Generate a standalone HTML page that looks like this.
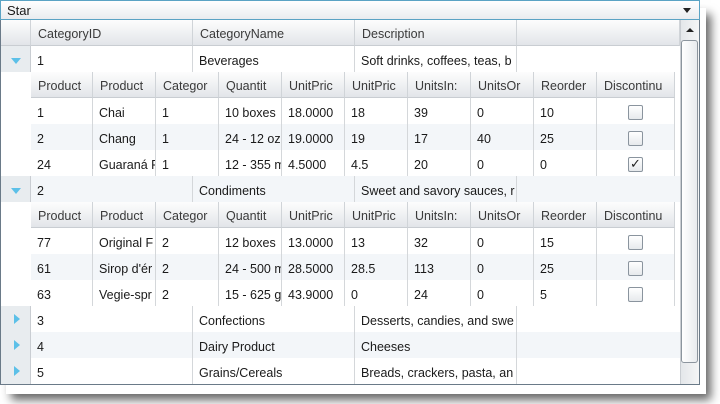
<!DOCTYPE html>
<html><head><style>
body{margin:0;width:720px;height:404px;background:#fff;font-family:"Liberation Sans",sans-serif;font-size:12.5px;color:#1a1a1a;position:relative;overflow:hidden}
.a{position:absolute;box-sizing:border-box}
.hd{background:linear-gradient(#fdfdfd,#e2e5e9);border-right:1px solid #d0d4d8;border-bottom:1px solid #c9cdd2;color:#3a3a3a;padding-left:7px;padding-top:1px;line-height:26px;white-space:nowrap;overflow:hidden}
.c{border-right:1px solid #d4d7da;padding-left:6px;padding-top:2px;line-height:26px;white-space:nowrap;overflow:hidden;height:26px}
.alt{background:#f3f6f9}
.ind{background:#e8ecef}
.cb{position:absolute;width:13px;height:13px;border:1px solid #8a949e;border-radius:2px;background:linear-gradient(#fff,#e6e9ec)}
</style></head><body>
<div class="a" style="left:6px;top:8px;width:700px;height:386px;box-shadow:5px 6px 9px rgba(0,0,0,.6);background:#fff"></div>
<div class="a" style="left:0;top:0;width:700px;height:385px;background:#fff;border-left:1px solid #6a7a88;border-right:1px solid #6a7a88;border-bottom:1px solid #6a7a88"></div>
<div class="a" style="left:0;top:0;width:700px;height:20px;border:1px solid #5aa3c4;background:linear-gradient(#fff,#e9ecef);padding-left:6px;line-height:19px;font-size:13px">Star</div>
<div class="a" style="left:683px;top:8px;width:0;height:0;border-left:4px solid transparent;border-right:4px solid transparent;border-top:5px solid #222"></div>
<div class="a hd" style="left:1px;top:20px;width:30px;height:26px"></div>
<div class="a hd" style="left:31px;top:20px;width:162px;height:26px">CategoryID</div>
<div class="a hd" style="left:193px;top:20px;width:162px;height:26px">CategoryName</div>
<div class="a hd" style="left:355px;top:20px;width:162px;height:26px">Description</div>
<div class="a hd" style="left:517px;top:20px;width:163px;height:26px"></div>
<div class="a ind" style="left:1px;top:46px;width:30px;height:26px"></div>
<div class="a ind" style="left:1px;top:176px;width:30px;height:26px"></div>
<div class="a ind" style="left:1px;top:306px;width:30px;height:78px;border-right:1px solid #c9cdd2"></div>
<div class="a" style="left:30px;top:46px;width:1px;height:26px;background:#c9cdd2"></div>
<div class="a" style="left:30px;top:176px;width:1px;height:26px;background:#c9cdd2"></div>
<div class="a" style="left:11px;top:58px;border-left:5px solid transparent;border-right:5px solid transparent;border-top:6px solid #5cc0e8"></div>
<div class="a" style="left:11px;top:188px;border-left:5px solid transparent;border-right:5px solid transparent;border-top:6px solid #5cc0e8"></div>
<div class="a" style="left:14px;top:314px;border-top:5px solid transparent;border-bottom:5px solid transparent;border-left:6px solid #5cc0e8"></div>
<div class="a" style="left:14px;top:340px;border-top:5px solid transparent;border-bottom:5px solid transparent;border-left:6px solid #5cc0e8"></div>
<div class="a" style="left:14px;top:366px;border-top:5px solid transparent;border-bottom:5px solid transparent;border-left:6px solid #5cc0e8"></div>
<div class="a c" style="left:31px;top:46px;width:162px">1</div><div class="a c" style="left:193px;top:46px;width:162px">Beverages</div><div class="a c" style="left:355px;top:46px;width:162px">Soft drinks, coffees, teas, b</div>
<div class="a c alt" style="left:31px;top:176px;width:162px">2</div><div class="a c alt" style="left:193px;top:176px;width:162px">Condiments</div><div class="a c alt" style="left:355px;top:176px;width:162px">Sweet and savory sauces, r</div><div class="a alt" style="left:517px;top:176px;width:163px;height:26px"></div>
<div class="a c" style="left:31px;top:306px;width:162px">3</div><div class="a c" style="left:193px;top:306px;width:162px">Confections</div><div class="a c" style="left:355px;top:306px;width:162px">Desserts, candies, and swe</div>
<div class="a alt" style="left:31px;top:332px;width:649px;height:26px"></div>
<div class="a c" style="left:31px;top:332px;width:162px">4</div><div class="a c" style="left:193px;top:332px;width:162px">Dairy Product</div><div class="a c" style="left:355px;top:332px;width:162px">Cheeses</div>
<div class="a c" style="left:31px;top:358px;width:162px">5</div><div class="a c" style="left:193px;top:358px;width:162px">Grains/Cereals</div><div class="a c" style="left:355px;top:358px;width:162px">Breads, crackers, pasta, an</div>
<div class="a hd" style="left:31px;top:72px;width:62px;height:26px">Product</div>
<div class="a hd" style="left:93px;top:72px;width:63px;height:26px">Product</div>
<div class="a hd" style="left:156px;top:72px;width:63px;height:26px">Categor</div>
<div class="a hd" style="left:219px;top:72px;width:63px;height:26px">Quantit</div>
<div class="a hd" style="left:282px;top:72px;width:63px;height:26px">UnitPric</div>
<div class="a hd" style="left:345px;top:72px;width:63px;height:26px">UnitPric</div>
<div class="a hd" style="left:408px;top:72px;width:63px;height:26px">UnitsIn:</div>
<div class="a hd" style="left:471px;top:72px;width:63px;height:26px">UnitsOr</div>
<div class="a hd" style="left:534px;top:72px;width:63px;height:26px">Reorder</div>
<div class="a hd" style="left:597px;top:72px;width:78px;height:26px">Discontinu</div>
<div class="a alt" style="left:31px;top:124px;width:644px;height:26px"></div>
<div class="a c" style="left:31px;top:98px;width:62px">1</div><div class="a c" style="left:93px;top:98px;width:63px">Chai</div><div class="a c" style="left:156px;top:98px;width:63px">1</div><div class="a c" style="left:219px;top:98px;width:63px">10 boxes</div><div class="a c" style="left:282px;top:98px;width:63px">18.0000</div><div class="a c" style="left:345px;top:98px;width:63px">18</div><div class="a c" style="left:408px;top:98px;width:63px">39</div><div class="a c" style="left:471px;top:98px;width:63px">0</div><div class="a c" style="left:534px;top:98px;width:63px">10</div><div class="a c" style="left:597px;top:98px;width:78px"></div>
<div class="a c" style="left:31px;top:124px;width:62px">2</div><div class="a c" style="left:93px;top:124px;width:63px">Chang</div><div class="a c" style="left:156px;top:124px;width:63px">1</div><div class="a c" style="left:219px;top:124px;width:63px">24 - 12 oz</div><div class="a c" style="left:282px;top:124px;width:63px">19.0000</div><div class="a c" style="left:345px;top:124px;width:63px">19</div><div class="a c" style="left:408px;top:124px;width:63px">17</div><div class="a c" style="left:471px;top:124px;width:63px">40</div><div class="a c" style="left:534px;top:124px;width:63px">25</div><div class="a c" style="left:597px;top:124px;width:78px"></div>
<div class="a c" style="left:31px;top:150px;width:62px">24</div><div class="a c" style="left:93px;top:150px;width:63px">Guaraná F</div><div class="a c" style="left:156px;top:150px;width:63px">1</div><div class="a c" style="left:219px;top:150px;width:63px">12 - 355 m</div><div class="a c" style="left:282px;top:150px;width:63px">4.5000</div><div class="a c" style="left:345px;top:150px;width:63px">4.5</div><div class="a c" style="left:408px;top:150px;width:63px">20</div><div class="a c" style="left:471px;top:150px;width:63px">0</div><div class="a c" style="left:534px;top:150px;width:63px">0</div><div class="a c" style="left:597px;top:150px;width:78px"></div>
<div class="cb" style="left:628px;top:105px"></div>
<div class="cb" style="left:628px;top:131px"></div>
<div class="cb" style="left:628px;top:157px;font-size:13px;line-height:12px;text-align:center;color:#222">✓</div>
<div class="a hd" style="left:31px;top:202px;width:62px;height:26px">Product</div>
<div class="a hd" style="left:93px;top:202px;width:63px;height:26px">Product</div>
<div class="a hd" style="left:156px;top:202px;width:63px;height:26px">Categor</div>
<div class="a hd" style="left:219px;top:202px;width:63px;height:26px">Quantit</div>
<div class="a hd" style="left:282px;top:202px;width:63px;height:26px">UnitPric</div>
<div class="a hd" style="left:345px;top:202px;width:63px;height:26px">UnitPric</div>
<div class="a hd" style="left:408px;top:202px;width:63px;height:26px">UnitsIn:</div>
<div class="a hd" style="left:471px;top:202px;width:63px;height:26px">UnitsOr</div>
<div class="a hd" style="left:534px;top:202px;width:63px;height:26px">Reorder</div>
<div class="a hd" style="left:597px;top:202px;width:78px;height:26px">Discontinu</div>
<div class="a alt" style="left:31px;top:254px;width:644px;height:26px"></div>
<div class="a c" style="left:31px;top:228px;width:62px">77</div><div class="a c" style="left:93px;top:228px;width:63px">Original F</div><div class="a c" style="left:156px;top:228px;width:63px">2</div><div class="a c" style="left:219px;top:228px;width:63px">12 boxes</div><div class="a c" style="left:282px;top:228px;width:63px">13.0000</div><div class="a c" style="left:345px;top:228px;width:63px">13</div><div class="a c" style="left:408px;top:228px;width:63px">32</div><div class="a c" style="left:471px;top:228px;width:63px">0</div><div class="a c" style="left:534px;top:228px;width:63px">15</div><div class="a c" style="left:597px;top:228px;width:78px"></div>
<div class="a c" style="left:31px;top:254px;width:62px">61</div><div class="a c" style="left:93px;top:254px;width:63px">Sirop d'ér</div><div class="a c" style="left:156px;top:254px;width:63px">2</div><div class="a c" style="left:219px;top:254px;width:63px">24 - 500 m</div><div class="a c" style="left:282px;top:254px;width:63px">28.5000</div><div class="a c" style="left:345px;top:254px;width:63px">28.5</div><div class="a c" style="left:408px;top:254px;width:63px">113</div><div class="a c" style="left:471px;top:254px;width:63px">0</div><div class="a c" style="left:534px;top:254px;width:63px">25</div><div class="a c" style="left:597px;top:254px;width:78px"></div>
<div class="a c" style="left:31px;top:280px;width:62px">63</div><div class="a c" style="left:93px;top:280px;width:63px">Vegie-spr</div><div class="a c" style="left:156px;top:280px;width:63px">2</div><div class="a c" style="left:219px;top:280px;width:63px">15 - 625 g</div><div class="a c" style="left:282px;top:280px;width:63px">43.9000</div><div class="a c" style="left:345px;top:280px;width:63px">0</div><div class="a c" style="left:408px;top:280px;width:63px">24</div><div class="a c" style="left:471px;top:280px;width:63px">0</div><div class="a c" style="left:534px;top:280px;width:63px">5</div><div class="a c" style="left:597px;top:280px;width:78px"></div>
<div class="cb" style="left:628px;top:235px"></div>
<div class="cb" style="left:628px;top:261px"></div>
<div class="cb" style="left:628px;top:287px"></div>
<div class="a" style="left:516px;top:46px;width:1px;height:26px;background:#d4d7da"></div>
<div class="a" style="left:516px;top:176px;width:1px;height:26px;background:#d4d7da"></div>
<div class="a" style="left:516px;top:306px;width:1px;height:78px;background:#d4d7da"></div>
<div class="a" style="left:680px;top:20px;width:19px;height:364px;background:linear-gradient(90deg,#e4e7ea,#f4f5f6);border-left:1px solid #c9cdd2"></div>
<div class="a" style="left:686px;top:28px;border-left:4px solid transparent;border-right:4px solid transparent;border-bottom:4px solid #222"></div>
<div class="a" style="left:681px;top:40px;width:17px;height:323px;border:1px solid #8c959e;border-radius:3px;background:linear-gradient(90deg,#fff,#e8ebee)"></div>
</body></html>
